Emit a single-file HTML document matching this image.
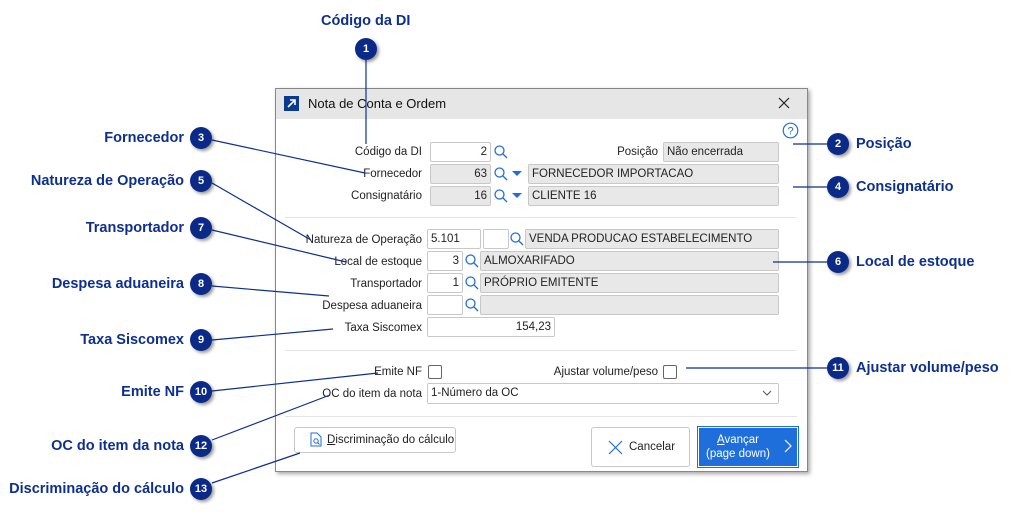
<!DOCTYPE html>
<html><head><meta charset="utf-8"><style>
*{box-sizing:border-box;margin:0;padding:0}
body{width:1020px;height:515px;background:#fff;position:relative;overflow:hidden;font-family:"Liberation Sans","DejaVu Sans",sans-serif}
.a{position:absolute}
.cl{position:absolute;font-weight:bold;color:#0d2f8f;font-size:14.5px;white-space:nowrap;font-family:"Liberation Sans",sans-serif}
.cr{position:absolute;width:22px;height:22px;border-radius:50%;background:#0b2a88;color:#fff;font-size:11px;font-weight:bold;text-align:center;line-height:22px;box-shadow:2px 2px 3px rgba(0,0,0,.4);font-family:"Liberation Sans",sans-serif}
.lb{position:absolute;font-size:11.5px;color:#222;text-align:right;white-space:nowrap}
.in{position:absolute;height:20px;border:1px solid #c8c8c8;border-radius:2px;background:#fff;font-size:11.5px;color:#222;line-height:19px;padding:0 3px;white-space:nowrap}
.g{background:#e8e8e8}
.r{text-align:right}
.ar{position:absolute;width:0;height:0;border-left:5px solid transparent;border-right:5px solid transparent;border-top:5px solid #1e6fdc}
.sep{position:absolute;height:1px;background:#e4e4e4}
.cb{position:absolute;width:14px;height:14px;border:1px solid #666;border-radius:2px;background:#fff}
</style></head><body>
<div class="a" style="left:275px;top:88px;width:533px;height:384px;border:1px solid #888;background:#fff;box-shadow:2px 2px 4px rgba(0,0,0,.35)"></div>
<div class="a" style="left:276px;top:89px;width:531px;height:30px;background:#e6e6e6"></div>
<div class="a" style="left:284px;top:96px;width:15px;height:15px;background:#0c3a8c"></div>
<svg class="a" style="left:284px;top:96px" width="15" height="15"><path d="M4 11L11 4M6 4H11V9" stroke="#fff" stroke-width="1.6" fill="none"/></svg>
<div class="a" style="left:308px;top:96px;font-size:13px;color:#111">Nota de Conta e Ordem</div>
<svg class="a" style="left:778px;top:97px" width="12" height="12"><path d="M1 1L11 11M11 1L1 11" stroke="#222" stroke-width="1.2"/></svg>
<svg class="a" style="left:782px;top:122px" width="17" height="17"><circle cx="8.5" cy="8.5" r="7.3" stroke="#1e6fdc" stroke-width="1.2" fill="none"/><text x="8.5" y="12.5" font-size="11" fill="#1e6fdc" text-anchor="middle" font-family="Liberation Sans">?</text></svg>
<div class="lb" style="right:598px;top:146px">Código da DI</div>
<div class="in r" style="left:430px;top:142px;width:61px">2</div>
<div class="lb" style="right:362px;top:146px">Posição</div>
<div class="in g" style="left:663px;top:142px;width:116px">Não encerrada</div>
<div class="lb" style="right:598px;top:168px">Fornecedor</div>
<div class="in g r" style="left:430px;top:164px;width:61px">63</div>
<div class="in g" style="left:528px;top:164px;width:251px">FORNECEDOR IMPORTACAO</div>
<div class="lb" style="right:598px;top:190px">Consignatário</div>
<div class="in g r" style="left:430px;top:186px;width:61px">16</div>
<div class="in g" style="left:528px;top:186px;width:251px">CLIENTE 16</div>
<div class="ar" style="left:512px;top:171px"></div>
<div class="ar" style="left:512px;top:193px"></div>
<div class="sep" style="left:285px;top:217px;width:512px"></div>
<div class="lb" style="right:598px;top:234px">Natureza de Operação</div>
<div class="in" style="left:427px;top:229px;width:54px">5.101</div>
<div class="in" style="left:483px;top:229px;width:26px"></div>
<div class="in g" style="left:525px;top:229px;width:254px">VENDA PRODUCAO ESTABELECIMENTO</div>
<div class="lb" style="right:598px;top:256px">Local de estoque</div>
<div class="in r" style="left:427px;top:251px;width:36px">3</div>
<div class="in g" style="left:480px;top:251px;width:299px">ALMOXARIFADO</div>
<div class="lb" style="right:598px;top:278px">Transportador</div>
<div class="in r" style="left:427px;top:273px;width:36px">1</div>
<div class="in g" style="left:480px;top:273px;width:299px">PRÓPRIO EMITENTE</div>
<div class="lb" style="right:598px;top:300px">Despesa aduaneira</div>
<div class="in" style="left:427px;top:295px;width:36px"></div>
<div class="in g" style="left:480px;top:295px;width:299px"></div>
<div class="lb" style="right:598px;top:322px">Taxa Siscomex</div>
<div class="in r" style="left:427px;top:317px;width:128px">154,23</div>
<div class="sep" style="left:285px;top:350px;width:512px"></div>
<div class="lb" style="right:598px;top:366px">Emite NF</div>
<div class="cb" style="left:428px;top:365px"></div>
<div class="lb" style="right:362px;top:366px">Ajustar volume/peso</div>
<div class="cb" style="left:663px;top:365px"></div>
<div class="lb" style="right:598px;top:388px">OC do item da nota</div>
<div class="in" style="left:427px;top:383px;width:352px;height:21px">1-Número da OC</div>
<svg class="a" style="left:762px;top:390px" width="10" height="7"><path d="M1 1L5 5L9 1" stroke="#555" fill="none"/></svg>
<div class="sep" style="left:285px;top:416px;width:512px"></div>
<div class="a" style="left:294px;top:427px;width:162px;height:26px;border:1px solid #c8c8c8;border-radius:3px;background:#fff"></div>
<svg class="a" style="left:310px;top:432px" width="12" height="15"><path d="M1 1H7L11 5V14H1Z" stroke="#1e6fdc" fill="none"/><circle cx="6" cy="9" r="2.2" stroke="#1e6fdc" fill="none"/><path d="M7.5 10.5L9.5 12.5" stroke="#1e6fdc"/></svg>
<div class="a" style="left:327px;top:434px;font-size:11.5px;color:#222"><u>D</u>iscriminação do cálculo</div>
<div class="a" style="left:591px;top:427px;width:99px;height:40px;border:1px solid #c8c8c8;border-radius:3px;background:#fff"></div>
<svg class="a" style="left:608px;top:440px" width="15" height="15"><path d="M1 1L14 14M14 1L1 14" stroke="#1e6fdc" stroke-width="1.2"/></svg>
<div class="a" style="left:629px;top:441px;font-size:11.5px;color:#222">Cancelar</div>
<div class="a" style="left:697px;top:426px;width:102px;height:42px;border:1px solid #1e6fdc;background:#fff"></div>
<div class="a" style="left:699px;top:428px;width:98px;height:38px;background:#1e6fdc"></div>
<div class="a" style="left:700px;top:433px;width:76px;font-size:11.5px;color:#fff;text-align:center;line-height:14px"><u>A</u>vançar<br>(page down)</div>
<svg class="a" style="left:784px;top:439px" width="8" height="14"><path d="M1 1L7 7L1 13" stroke="#fff" stroke-width="1.2" fill="none"/></svg>
<svg class="a" style="left:0;top:0" width="1020" height="515"><g stroke="#1e6fdc" stroke-width="1.3" fill="none">
<g transform="translate(494,145)"><circle cx="5.5" cy="5.5" r="4.5"/><path d="M9 9L13 13"/></g>
<g transform="translate(494,167)"><circle cx="5.5" cy="5.5" r="4.5"/><path d="M9 9L13 13"/></g>
<g transform="translate(494,189)"><circle cx="5.5" cy="5.5" r="4.5"/><path d="M9 9L13 13"/></g>
<g transform="translate(510,232)"><circle cx="5.5" cy="5.5" r="4.5"/><path d="M9 9L13 13"/></g>
<g transform="translate(465,254)"><circle cx="5.5" cy="5.5" r="4.5"/><path d="M9 9L13 13"/></g>
<g transform="translate(465,276)"><circle cx="5.5" cy="5.5" r="4.5"/><path d="M9 9L13 13"/></g>
<g transform="translate(465,298)"><circle cx="5.5" cy="5.5" r="4.5"/><path d="M9 9L13 13"/></g>
</g>
<g stroke="#0d2f8f" stroke-width="1.2" fill="none">
<line x1="366" y1="60" x2="366" y2="144"/>
<line x1="212" y1="140" x2="365" y2="173"/>
<line x1="827" y1="144" x2="793" y2="144"/>
<line x1="827" y1="187" x2="793" y2="187"/>
<line x1="212" y1="183" x2="311" y2="240"/>
<line x1="827" y1="262" x2="773" y2="262"/>
<line x1="212" y1="230" x2="346" y2="262"/>
<line x1="212" y1="286" x2="329" y2="296"/>
<line x1="212" y1="340" x2="333" y2="329"/>
<line x1="212" y1="391" x2="378" y2="373"/>
<line x1="827" y1="368" x2="686" y2="368"/>
<line x1="212" y1="440" x2="330" y2="395"/>
<line x1="212" y1="483" x2="300" y2="453"/>
</g></svg>
<div class="cl" style="left:321px;top:13px">Código da DI</div>
<div class="cr" style="left:355px;top:38px">1</div>
<div class="cr" style="left:827px;top:133px">2</div><div class="cl" style="left:856px;top:136px">Posição</div>
<div class="cr" style="left:827px;top:176px">4</div><div class="cl" style="left:856px;top:179px">Consignatário</div>
<div class="cr" style="left:827px;top:251px">6</div><div class="cl" style="left:856px;top:254px">Local de estoque</div>
<div class="cr" style="left:827px;top:357px">11</div><div class="cl" style="left:856px;top:360px">Ajustar volume/peso</div>
<div class="cr" style="left:190px;top:127px">3</div><div class="cl" style="right:836px;top:130px">Fornecedor</div>
<div class="cr" style="left:190px;top:170px">5</div><div class="cl" style="right:836px;top:173px">Natureza de Operação</div>
<div class="cr" style="left:190px;top:217px">7</div><div class="cl" style="right:836px;top:220px">Transportador</div>
<div class="cr" style="left:190px;top:273px">8</div><div class="cl" style="right:836px;top:276px">Despesa aduaneira</div>
<div class="cr" style="left:190px;top:329px">9</div><div class="cl" style="right:836px;top:332px">Taxa Siscomex</div>
<div class="cr" style="left:190px;top:381px">10</div><div class="cl" style="right:836px;top:384px">Emite NF</div>
<div class="cr" style="left:190px;top:435px">12</div><div class="cl" style="right:836px;top:438px">OC do item da nota</div>
<div class="cr" style="left:190px;top:478px">13</div><div class="cl" style="right:836px;top:481px">Discriminação do cálculo</div>
</body></html>
